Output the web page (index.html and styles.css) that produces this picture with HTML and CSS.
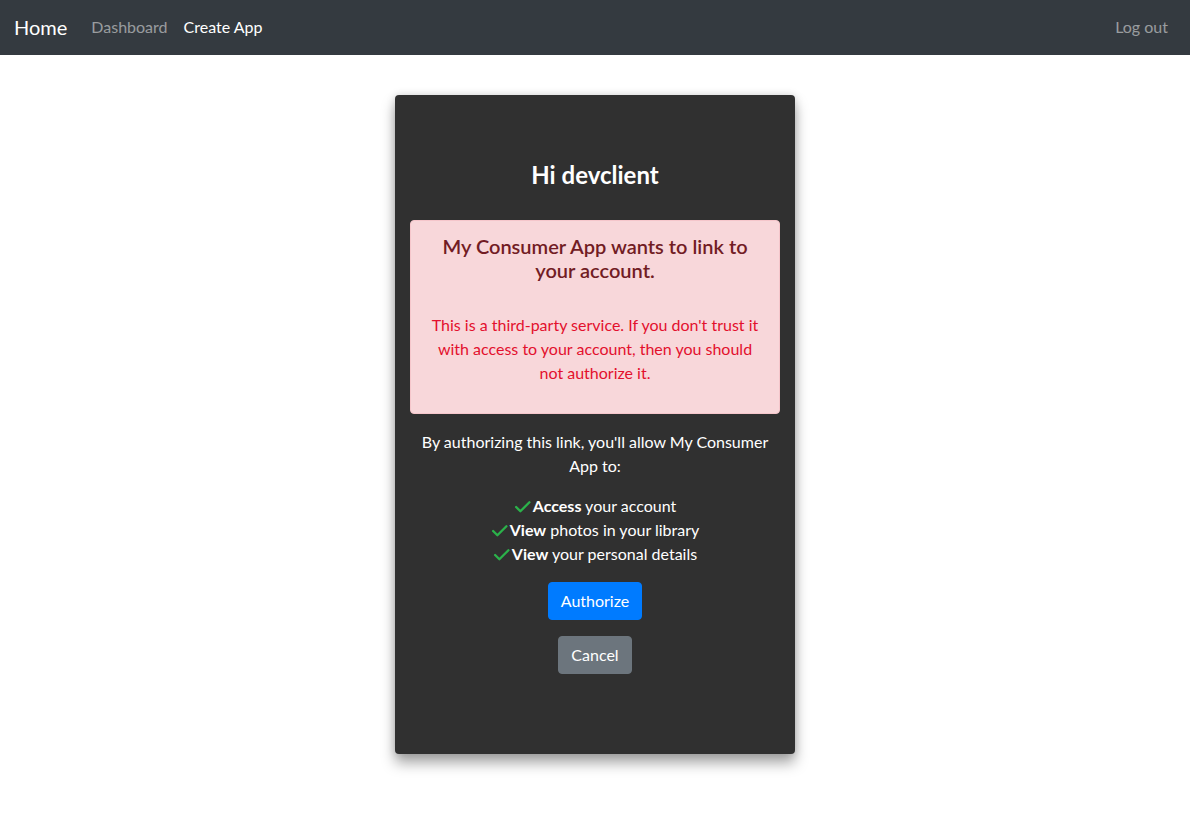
FILE: index.html
```html
<!DOCTYPE html>
<html lang="en">
<head>
<meta charset="utf-8">
<title>Authorize</title>
<link rel="stylesheet" href="styles.css">
</head>
<body>
<nav class="navbar">
  <a class="brand" href="#">Home</a>
  <div class="nav-links">
    <a class="nav-link muted" href="#">Dashboard</a>
    <a class="nav-link" href="#">Create App</a>
  </div>
  <a class="nav-link muted logout" href="#">Log out</a>
</nav>
<main class="page">
  <section class="card">
    <h3 class="greeting">Hi devclient</h3>
    <div class="alert">
      <h4 class="alert-heading">My Consumer App wants to link to your account.</h4>
      <p class="alert-text">This is a third-party service. If you don't trust it with access to your account, then you should not authorize it.</p>
    </div>
    <p class="intro">By authorizing this link, you'll allow My Consumer App to:</p>
    <ul class="perms">
      <li><svg class="check" viewBox="0 0 16 16"><path d="M2 8.5 L6 12.5 L14.5 4"/></svg><b>Access</b> your account</li>
      <li><svg class="check" viewBox="0 0 16 16"><path d="M2 8.5 L6 12.5 L14.5 4"/></svg><b>View</b> photos in your library</li>
      <li><svg class="check" viewBox="0 0 16 16"><path d="M2 8.5 L6 12.5 L14.5 4"/></svg><b>View</b> your personal details</li>
    </ul>
    <div class="actions">
      <button class="btn btn-primary">Authorize</button>
      <button class="btn btn-secondary">Cancel</button>
    </div>
  </section>
</main>
</body>
</html>
```
FILE: styles.css
```css
* { box-sizing: border-box; }
html, body { margin: 0; padding: 0; }
body {
  font-family: "Lato", "Open Sans", "Noto Sans", sans-serif;
  font-size: 16px;
  line-height: 24px;
  color: #212529;
  background: #fff;
}
a { text-decoration: none; }
.navbar {
  height: 55px;
  background: #343a40;
  display: flex;
  align-items: center;
  padding: 0 16px 1px 14px;
}
.brand {
  color: #fff;
  font-size: 20px;
  margin-right: 16px;
  line-height: 30px;
}
.nav-links { display: flex; flex: 1; }
.nav-link {
  color: #fff;
  padding: 8px 8px;
}
.nav-link.muted { color: rgba(255,255,255,0.5); }
.logout { padding-right: 6px; }
.page {
  display: flex;
  justify-content: center;
  padding: 40px 0 60px;
}
.card {
  width: 400px;
  height: 659px;
  background: #303030;
  border-radius: 4px;
  box-shadow: 0 9px 14px rgba(0,0,0,0.35), 0 0 8px rgba(0,0,0,0.15);
  padding: 65px 15px 0;
  color: #fff;
  text-align: center;
}
.greeting {
  margin: 0;
  font-size: 24px;
  line-height: 29px;
  font-weight: 700;
}
.alert {
  margin-top: 31px;
  background: #f8d7da;
  border: 1px solid #f5c6cb;
  border-radius: 4px;
  padding: 13px 20px 28px;
}
.alert-heading {
  margin: 0;
  font-size: 20px;
  line-height: 24px;
  font-weight: 600;
  color: #721c24;
}
.alert-text {
  margin: 31px 0 0;
  color: #e3102d;
}
.intro {
  margin: 16px 0 0;
}
.perms {
  list-style: none;
  margin: 16px 0 0;
  padding: 0;
}
.perms li { text-align: center; }
.check {
  width: 17px;
  height: 17px;
  margin-right: 2px;
  vertical-align: -3px;
  fill: none;
  stroke: #2bb24a;
  stroke-width: 2.2;
  stroke-linecap: round;
  stroke-linejoin: round;
}
.actions {
  margin-top: 16px;
  display: flex;
  flex-direction: column;
  align-items: center;
  gap: 16px;
}
.btn {
  font-family: inherit;
  font-size: 16px;
  line-height: 24px;
  padding: 6px 12px;
  border: 1px solid transparent;
  border-radius: 4px;
  color: #fff;
}
.btn-primary { background: #007bff; border-color: #007bff; }
.btn-secondary { background: #6c757d; border-color: #6c757d; }
```
